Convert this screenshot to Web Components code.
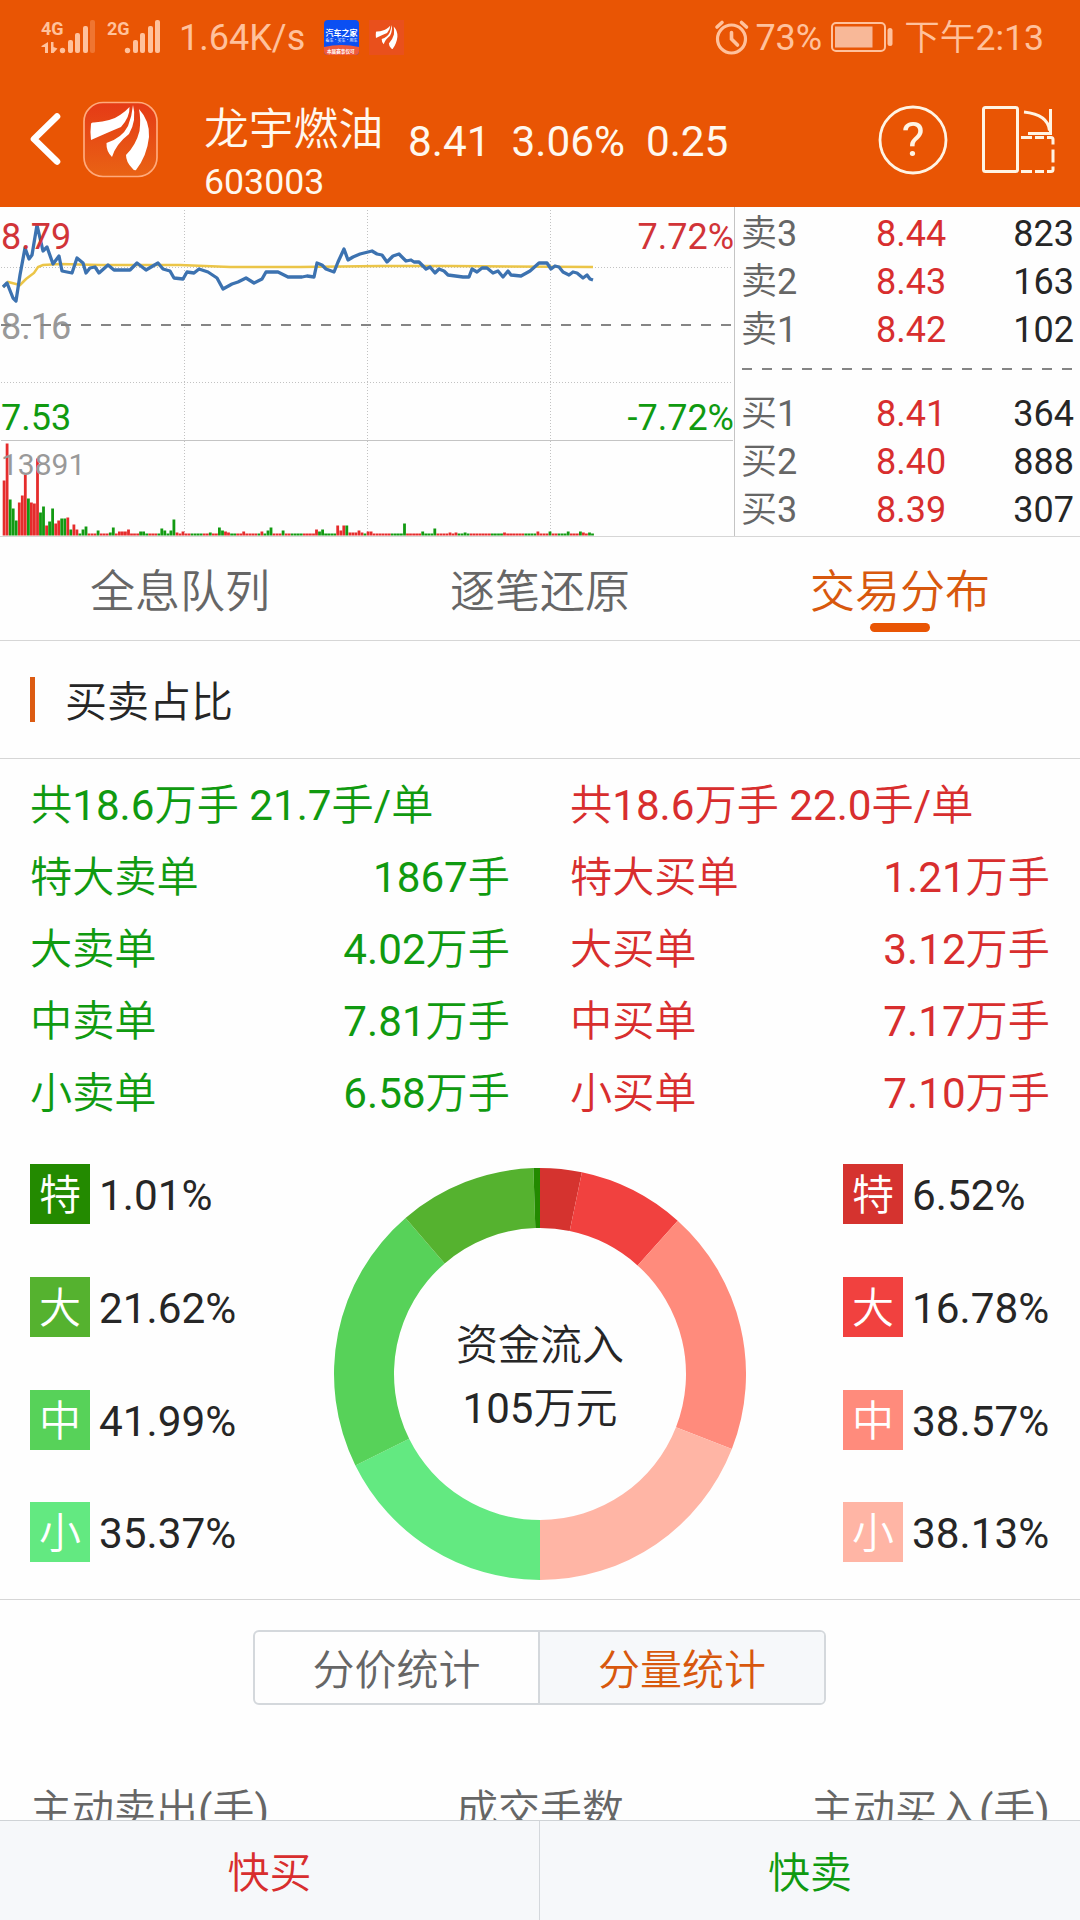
<!DOCTYPE html>
<html lang="zh-CN">
<head>
<meta charset="utf-8">
<title>龙宇燃油 603003</title>
<style>
html, body {
  margin: 0;
  padding: 0;
}
body {
  --accent: #e95504;
  --up: #d82e2e;
  --down: #109a10;
  --ink: #262626;
  --muted: #666;
  --rule: #d6d6d6;
  width: 1080px;
  height: 1920px;
  overflow: hidden;
  background: #fefefe;
  color: var(--ink);
  font-family: Roboto, "Noto Sans CJK SC DemiLight", "Noto Sans CJK SC", sans-serif;
  font-size: 42px;
  font-weight: 400;
}
</style>
</head>
<body>
<stock-app>
  <phone-status slot="top"></phone-status>
  <stock-header slot="top" code="603003" price="8.41" pct="3.06%" diff="0.25">龙宇燃油</stock-header>

  <quote-panel>
    <trend-chart></trend-chart>
    <order-book slot="book"></order-book>
  </quote-panel>

  <tab-bar>
    <tab-item>全息队列</tab-item>
    <tab-item>逐笔还原</tab-item>
    <tab-item active>交易分布</tab-item>
  </tab-bar>

  <section-title>买卖占比</section-title>

  <order-totals>
    <order-list side="sell">
      <span slot="head">共18.6万手 21.7手/单</span>
      <order-line value="1867手">特大卖单</order-line>
      <order-line value="4.02万手">大卖单</order-line>
      <order-line value="7.81万手">中卖单</order-line>
      <order-line value="6.58万手">小卖单</order-line>
    </order-list>
    <order-list side="buy">
      <span slot="head">共18.6万手 22.0手/单</span>
      <order-line value="1.21万手">特大买单</order-line>
      <order-line value="3.12万手">大买单</order-line>
      <order-line value="7.17万手">中买单</order-line>
      <order-line value="7.10万手">小买单</order-line>
    </order-list>
  </order-totals>

  <flow-share>
    <share-item slot="sell" color="#238a00" value="1.01%">特</share-item>
    <share-item slot="sell" color="#55b22f" value="21.62%">大</share-item>
    <share-item slot="sell" color="#57d259" value="41.99%">中</share-item>
    <share-item slot="sell" color="#63e981" value="35.37%">小</share-item>
    <ring-chart>
      <span>资金流入</span>
      <span>105万元</span>
    </ring-chart>
    <share-item slot="buy" color="#d5332f" value="6.52%">特</share-item>
    <share-item slot="buy" color="#f1413f" value="16.78%">大</share-item>
    <share-item slot="buy" color="#ff8b7c" value="38.57%">中</share-item>
    <share-item slot="buy" color="#ffb5a5" value="38.13%">小</share-item>
  </flow-share>

  <segment-switch>
    <span slot="left">分价统计</span>
    <span slot="right">分量统计</span>
  </segment-switch>

  <table-head>
    <span>主动卖出(手)</span>
    <span>成交手数</span>
    <span>主动买入(手)</span>
  </table-head>

  <trade-bar slot="bottom">
    <span slot="buy">快买</span>
    <span slot="sell">快卖</span>
  </trade-bar>
</stock-app>

<script>
(() => {
  const css = String.raw;
  const html = String.raw;

  // registers an element whose shadow root is cloned from a template
  const define = (name, styles, markup, setup) => {
    const template = document.createElement("template");
    template.innerHTML = `<style>${styles}</style>${markup}`;
    customElements.define(name, class extends HTMLElement {
      constructor() {
        super();
        this.attachShadow({ mode: "open" }).appendChild(template.content.cloneNode(true));
      }
      connectedCallback() {
        if (setup) setup(this, this.shadowRoot);
      }
    });
  };

  const fillText = (host, root, names) => {
    names.forEach((n) => {
      root.querySelector("." + n).textContent = host.getAttribute(n);
    });
  };

  define("stock-app", css`
:host { display: flex; flex-direction: column; height: 1920px; }
.top { flex: none; background: var(--accent); height: 207px; }
main { flex: 1; min-height: 0; overflow: hidden; }
`, html`
<div class="top"><slot name="top"></slot></div>
<main><slot></slot></main>
<slot name="bottom"></slot>
`);

  // three feather strokes, shared by the header logo and the notification icon
  const feather = html`
<path d="M8 23Q8 21 11 21.500Q29 20 37 14Q43 10 46.500 6Q47 16 38 26Q26 31 8 39Q7 30 8 23Z"/>
<path d="M50 4Q54 19 46 33Q33 43 29 56Q23 50 23.500 42Q39 37 45 25Q49 15 50 4Z"/>
<path d="M56 8Q67 20 66 36Q64 55 53 69Q51 70 49 67Q43 61 43 54Q53 44 56.500 30Q58 18 56 8Z"/>`;

  define("phone-status", css`
:host { display: flex; height: 74px; align-items: center; color: #ffc19c; font-size: 36px; }
svg { display: block; flex: none; overflow: visible; }
.left { display: flex; align-items: center; flex: 1; padding-left: 40px; }
.right { display: flex; align-items: center; padding-right: 36px; }
.speed { margin: 2px 20px 0 18px; width: 125px; line-height: 42px; }
.apps { display: flex; gap: 10px; }
.pct { margin: 2px 9px 0 6px; line-height: 42px; }
.time { margin: 2px 0 0 11px; line-height: 42px; font-size: 35.600px; }
`, html`
<div class="left">
  <svg width="121" height="52" viewBox="40 10 121 52" fill="currentColor">
    <text x="41" y="34" font-size="18" font-weight="700">4G</text>
    <path d="M48 41v11h-3v-6h-3.500v-1zM51 41h2.500v5l4 1.500-4 4.500h-2.500z"/>
    <circle cx="62.500" cy="49.500" r="2.700"/>
    <rect x="68" y="39" width="5" height="13" rx="2"/>
    <rect x="75" y="32" width="5" height="20" rx="2"/>
    <rect x="83" y="25" width="5" height="27" rx="2"/>
    <rect x="90" y="19" width="5" height="33" rx="2" opacity=".3"/>
    <text x="107" y="34" font-size="18" font-weight="700">2G</text>
    <circle cx="127.500" cy="49.500" r="2.700"/>
    <rect x="133" y="39" width="5" height="13" rx="2"/>
    <rect x="140" y="32" width="5" height="20" rx="2"/>
    <rect x="148" y="25" width="5" height="27" rx="2"/>
    <rect x="155" y="19" width="5" height="33" rx="2"/>
  </svg>
  <span class="speed">1.64K/s</span>
  <div class="apps">
    <svg width="35" height="35" viewBox="0 0 35 35">
      <rect width="35" height="35" rx="4" fill="#0b4ff2"/>
      <path d="M0 27q17-4 35 0v4q0 4-4 4H4q-4 0-4-4z" fill="#ef5a3c"/>
      <g fill="#fff" font-family="'Noto Sans CJK SC', sans-serif">
        <text x="1.500" y="15.500" font-size="8" font-weight="700">汽车之家</text>
        <text x="1.500" y="22" font-size="4">看车·买车·用车</text>
        <text x="3" y="33" font-size="4.600" font-weight="700">本届赛事仅可</text>
      </g>
    </svg>
    <svg width="35" height="35" viewBox="0 0 35 35">
      <rect width="35" height="35" fill="#e9501c"/>
      <g fill="#fff" transform="translate(4 3.500) scale(.37)">${feather}</g>
    </svg>
  </div>
</div>
<div class="right">
  <svg width="34" height="36" viewBox="0 0 34 36" fill="none" stroke="currentColor" stroke-linecap="round">
    <circle cx="16.500" cy="20" r="14" stroke-width="3.200"/>
    <path d="M16.500 13.500v6.500l6 6" stroke-width="3.600"/>
    <path d="M2 8l5-4.500M31.500 8l-5-4.500" stroke-width="3.600"/>
  </svg>
  <span class="pct">73%</span>
  <svg width="62" height="30" viewBox="0 0 62 30">
    <rect x="1" y="1" width="53" height="28" rx="4" fill="none" stroke="currentColor" stroke-width="2"/>
    <rect x="4" y="4.500" width="37.500" height="21" fill="#f8b898"/>
    <rect x="56.500" y="6" width="5" height="18" rx="2.500" fill="currentColor"/>
  </svg>
  <span class="time">下午2:13</span>
</div>
`);

  define("stock-header", css`
:host { display: flex; height: 133px; color: #fff8ee; }
svg { display: block; flex: none; }
.back { margin: 37px 21px 0 29px; }
.logo { margin-top: 27px; }
.name { margin: 30px 0 0 46px; display: flex; flex-direction: column; font-size: 44.800px; line-height: 52px; width: 181px; }
.code { font-size: 35.700px; line-height: 42px; margin-top: 5px; }
.nums { display: flex; flex: 1; gap: 21px; font-size: 42.300px; line-height: 50px; margin: 43px 0 0 23px; }
.help { margin: 30.500px 34px 0 0; }
.turn { margin: 32px 25px 0 0; }
`, html`
<svg class="back" width="33" height="56" viewBox="0 0 33 56" fill="none" stroke="#fff" stroke-width="6.600" stroke-linecap="round" stroke-linejoin="round"><path d="M28 5.500L5 28l23 22.500"/></svg>
<svg class="logo" width="75" height="77" viewBox="0 0 75 77">
  <defs><linearGradient id="g" x2="0" y2="1"><stop stop-color="#e53a16"/><stop offset="1" stop-color="#e96314"/></linearGradient></defs>
  <rect x="1" y="1.500" width="73" height="74" rx="19" fill="url(#g)" stroke="#ffaa7c" stroke-width="1.700"/>
  <g fill="#fff">${feather}</g>
</svg>
<div class="name"><slot></slot><span class="code"></span></div>
<div class="nums"><span class="price"></span><span class="pct"></span><span class="diff"></span></div>
<svg class="help" width="70" height="70" viewBox="0 0 70 70">
  <circle cx="35" cy="35" r="33" fill="none" stroke="#fff4e4" stroke-width="2.800"/>
  <text x="35" y="51" text-anchor="middle" font-size="49" fill="#fff4e4">?</text>
</svg>
<svg class="turn" width="73" height="68" viewBox="0 0 73 68" fill="none" stroke="#fff4e4" stroke-width="3">
  <rect x="1.500" y="1.500" width="34" height="64" rx="2"/>
  <path d="M42 6Q66 8.500 67.500 24.500M68.500 3v24.500H46"/>
  <path d="M39 31.500h11m3 0h9m3 0h4q2 0 2 2v5m0 5v13m0 4v3q0 2-2 2h-4m-3 0h-9m-3 0H39"/>
</svg>
`, (host, root) => fillText(host, root, ["code", "price", "pct", "diff"]));

  define("quote-panel", css`
:host { display: grid; grid-template-columns: 734px 1fr; height: 329px; border-bottom: 1px solid var(--rule); }
.book { border-left: 1px solid #c4c4c4; }
`, html`<slot></slot><div class="book"><slot name="book"></slot></div>`);

  const price = `3,287 7,283 13,298 16,301 20,275 25,248 29,259 32,255 37,225 43,251 47,247 53,264 59,256 62,271
    72,273 77,258 83,263 86,273 90,268 95,267 99,273 108,265 114,270 130,270 137,263 146,270 158,263 163,269
    170,271 174,278 183,279 187,272 194,273 199,269 208,272 217,278 223,289 232,284 238,282 246,278 254,283
    262,279 266,272 278,272 288,277 302,277 307,276 314,277 317,263 322,265 326,269 334,272 338,262 344,249
    348,260 353,257 360,254 372,251 377,254 382,255 387,262 393,256 399,254 406,261 411,260 414,262 419,262
    426,269 430,267 435,273 439,269 444,271 448,275 463,277 469,277 472,269 477,272 482,268 487,268 493,273
    498,271 503,277 508,271 511,275 521,276 530,271 539,263 547,263 551,269 555,266 559,267 563,272 569,275
    573,272 577,273 583,278 587,275 590,279 593,280`;
  const average = `3,287 8,282 16,284 20,285 26,279 34,273 38,267 43,265 60,264 100,265 180,265 230,267 300,267 380,266 450,266 593,267`;

  // volume per minute, negative when the price fell
  const opening = [55, 92, -36, -27, -15, 33, 40, 61, -37, 33, 32, 77, -23, -29, 10, -14, -27, 12, 15, -17, -17, 18,
    -6, 11, 6, -2, -6, -9, 2, 2, 2, -5, 2, 2, 2, -3, -8, 2, 4, 4, 4, 6, 2, 2, 2, -4, -4, -2];
  const spikes = {
    52: -7, 53: -5, 55: -5, 56: -16, 57: 3, 59: 4, 68: -3, 71: -8, 72: -5, 73: 4, 74: 3, 79: 4, 85: 4, 87: -5, 88: -8,
    92: -5, 103: 6, 104: -4, 105: -6, 110: 10, 111: 5, 112: 10, 113: -10, 114: 3, 115: 3, 116: 3, 117: 5, 118: 3,
    120: 4, 121: 4, 132: -12, 138: -4, 142: -7, 147: 3, 149: 3, 152: -3, 165: 3, 176: 4, 180: -4, 186: -4, 190: -4, 191: 3, 193: -3
  };

  define("trend-chart", css`
:host { display: block; }
svg { display: block; }
text { font-size: 36px; }
`, html`
<svg width="734" height="329" viewBox="0 207 734 329">
  <g stroke="#c2c2c2" stroke-width="1" stroke-dasharray="1 2" fill="none">
    <path d="M184.500 210v325M367.500 210v325M550.500 210v325M1 267.500h732M1 382.500h732"/>
  </g>
  <path d="M1 440.500h732" stroke="#c4c4c4"/>
  <polyline points="${average}" fill="none" stroke="#ebc548" stroke-width="2.500"/>
  <polyline points="${price}" fill="none" stroke="#3c72b0" stroke-width="3.300" stroke-linejoin="round"/>
  <g class="bars"></g>
  <text x="1" y="249" fill="#d13438">8.79</text>
  <text x="1" y="339" fill="#999">8.16</text>
  <text x="1" y="430" fill="#109a10">7.53</text>
  <text x="1" y="475" fill="#999" style="font-size:30px">13891</text>
  <text x="734" y="249" fill="#d13438" text-anchor="end">7.72%</text>
  <text x="734" y="430" fill="#109a10" text-anchor="end">-7.72%</text>
  <path d="M1 325h732" stroke="#858585" stroke-width="2" stroke-dasharray="10 10"/>
</svg>
`, (host, root) => {
    let bars = "";
    for (let i = 0; i < 195; i++) {
      const v = opening[i] ?? spikes[i] ?? (i % 11 > 6 ? -2 : 2);
      const h = Math.abs(v);
      bars += `<rect x="${(2.7 + i * 3.033).toFixed(1)}" y="${535.5 - h}" width="2.8" height="${h}" fill="${v < 0 ? "#129a12" : "#e52c2c"}"/>`;
    }
    root.querySelector(".bars").innerHTML = bars;
  });

  define("order-book", css`
:host { display: block; font-size: 36px; padding: 3px 6px 0 6px; }
.row { display: grid; grid-template-columns: 135px 1fr auto; height: 48px; line-height: 48px; }
.name { color: var(--muted); }
.price { color: var(--up); }
.gap { height: 36px; padding: 13px 0 0 1px; box-sizing: border-box; }
svg { display: block; }
`, html`
<div class="asks"></div>
<div class="gap"><svg width="332" height="4"><path d="M0 2h332" stroke="#858585" stroke-width="2" stroke-dasharray="10 10"/></svg></div>
<div class="bids"></div>
`, (host, root) => {
    const row = ([name, price, volume]) => html`
<div class="row"><span class="name">${name}</span><span class="price">${price}</span><span>${volume}</span></div>`;
    root.querySelector(".asks").innerHTML = [["卖3", "8.44", 823], ["卖2", "8.43", 163], ["卖1", "8.42", 102]].map(row).join("");
    root.querySelector(".bids").innerHTML = [["买1", "8.41", 364], ["买2", "8.40", 888], ["买3", "8.39", 307]].map(row).join("");
  });

  define("tab-bar", css`
:host { display: grid; grid-template-columns: repeat(3, 1fr); height: 103px; border-bottom: 1px solid var(--rule); }
`, `<slot></slot>`);

  define("tab-item", css`
:host { display: flex; flex-direction: column; align-items: center; color: var(--muted); font-size: 45px; line-height: 60px; padding-top: 26px; }
:host([active]) { color: #d8580d; }
i { display: none; width: 60px; height: 9px; border-radius: 5px; background: var(--accent); }
:host([active]) i { display: block; }
`, `<slot></slot><i></i>`);

  define("section-title", css`
:host { display: flex; align-items: center; height: 117px; gap: 30px; padding-left: 30px; border-bottom: 1px solid var(--rule); line-height: 60px; }
i { width: 5px; height: 45px; background: #dc5b12; }
span { padding-top: 6px; }
`, `<i></i><span><slot></slot></span>`);

  define("order-totals", css`
:host { display: grid; grid-template-columns: 1fr 1fr; gap: 60px; padding: 11px 30px 0; }
`, `<slot></slot>`);

  define("order-list", css`
:host { display: flex; flex-direction: column; font-size: 42.200px; line-height: 72px; color: var(--down); }
:host([side=buy]) { color: var(--up); }
`, `<div><slot name="head"></slot></div><slot></slot>`);

  define("order-line", css`
:host { display: flex; justify-content: space-between; height: 72px; }
`, `<span><slot></slot></span><span class="value"></span>`,
  (host, root) => fillText(host, root, ["value"]));

  define("flow-share", css`
:host { display: flex; justify-content: space-between; height: 470px; border-bottom: 1px solid var(--rule); box-sizing: border-box; padding: 34px 30px 0; }
.side { display: flex; flex-direction: column; gap: 52.800px; width: 207px; }
`, html`
<div class="side"><slot name="sell"></slot></div>
<slot></slot>
<div class="side"><slot name="buy"></slot></div>
`);

  define("share-item", css`
:host { display: flex; height: 60px; gap: 9px; line-height: 64px; }
b { width: 60px; text-align: center; color: #fff; font-weight: 400; }
.value { font-size: 42.300px; }
`, `<b><slot></slot></b><span class="value"></span>`, (host, root) => {
    fillText(host, root, ["value"]);
    root.querySelector("b").style.background = host.getAttribute("color");
  });

  define("ring-chart", css`
:host { display: grid; width: 412px; height: 412px; margin-top: 4px; }
svg, .label { grid-area: 1 / 1; }
.label { display: flex; flex-direction: column; align-items: center; justify-content: center; line-height: 63px; padding-top: 6px; }
`, html`
<svg width="412" height="412" viewBox="-206 -206 412 412"></svg>
<div class="label"><slot></slot></div>
`, (host, root) => {
    // clockwise from the top: buys fill the right half, sells the left
    const parts = [
      [6.52, "#d5332f"], [16.78, "#f1413f"], [38.57, "#ff8b7c"], [38.13, "#ffb5a5"],
      [35.37, "#63e981"], [41.99, "#57d259"], [21.62, "#55b22f"], [1.02, "#238a00"]
    ];
    const at = (r, a) => `${(r * Math.sin(a)).toFixed(2)} ${(-r * Math.cos(a)).toFixed(2)}`;
    let from = 0;
    root.querySelector("svg").innerHTML = parts.map(([value, color]) => {
      const to = from + value / 100 * Math.PI;
      const d = `M${at(206, from)}A206 206 0 0 1 ${at(206, to)}L${at(146, to)}A146 146 0 0 0 ${at(146, from)}Z`;
      from = to;
      return `<path d="${d}" fill="${color}"/>`;
    }).join("");
  });

  define("segment-switch", css`
:host { display: flex; margin: 30px auto 0 253px; width: 573px; height: 75px; box-sizing: border-box; border: 2px solid #d4d8dc; border-radius: 6px; overflow: hidden; line-height: 77px; text-align: center; color: var(--muted); }
.off { width: 283px; }
.on { flex: 1; background: #f6f8fa; border-left: 2px solid #d4d8dc; color: #d8580d; }
`, `<div class="off"><slot name="left"></slot></div><div class="on"><slot name="right"></slot></div>`);

  define("table-head", css`
:host { display: flex; justify-content: space-between; padding: 76px 30px 0; line-height: 60px; color: var(--muted); }
`, `<slot></slot>`);

  define("trade-bar", css`
:host { display: grid; grid-template-columns: 1fr 1fr; flex: none; height: 100px; box-sizing: border-box; border-top: 1px solid #cfd3d6; background: #f6f8fa; text-align: center; line-height: 105px; }
.buy { color: var(--up); border-right: 1px solid #d4d8dc; }
.sell { color: var(--down); }
`, `<div class="buy"><slot name="buy"></slot></div><div class="sell"><slot name="sell"></slot></div>`);
})();
</script>
</body>
</html>
